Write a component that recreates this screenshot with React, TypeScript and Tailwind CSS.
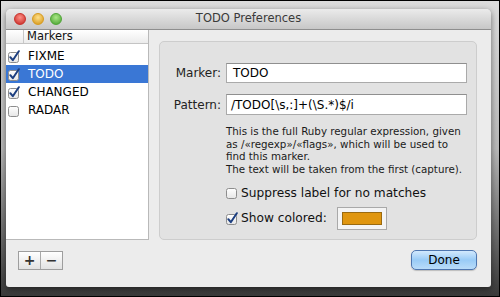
import React from 'react';

const font = { fontFamily: '"DejaVu Sans", "Liberation Sans", sans-serif' };

const Check = ({ checked }: { checked: boolean }) => (
  <svg width="13" height="13" viewBox="0 0 13 13" className="shrink-0">
    <defs>
      <linearGradient id="cb" x1="0" y1="0" x2="0" y2="1">
        <stop offset="0" stopColor="#ffffff" />
        <stop offset="1" stopColor="#e6e6e6" />
      </linearGradient>
    </defs>
    <rect x="1.5" y="2.5" width="10" height="10" rx="2" fill="url(#cb)" stroke="#8d8d8d" />
    {checked && (
      <path d="M3.3 7.2 L5.8 10.2 L11.8 1.2" fill="none" stroke="#1d3f80" strokeWidth="2" strokeLinecap="round" strokeLinejoin="round" />
    )}
  </svg>
);

const markers = [
  { name: 'FIXME', on: true },
  { name: 'TODO', on: true, selected: true },
  { name: 'CHANGED', on: true },
  { name: 'RADAR', on: false },
];

const Light = ({ color, dark }: { color: string; dark: string }) => (
  <div
    className="w-[12px] h-[12px] rounded-full border"
    style={{ background: `radial-gradient(circle at 50% 35%, ${color} 0%, ${dark} 90%)`, borderColor: dark }}
  />
);

export default function App() {
  return (
    <div className="w-[500px] h-[297px] border border-black bg-gradient-to-b from-[#dcdcdc] via-[#b8b8b8] to-[#3a3a3a] pl-[5px] pt-[8px] pr-[8px] pb-[9px]" style={font}>
      <div className="h-full flex flex-col bg-[#ececec] rounded-t-[5px] rounded-b-[3px] shadow-[0_2px_6px_rgba(0,0,0,0.5)] overflow-hidden">
        <div className="h-[21px] shrink-0 flex items-center bg-gradient-to-b from-[#ebebeb] to-[#c7c7c7] border-b border-[#8e8e8e]">
          <div className="w-[70px] flex items-center gap-[6px] pl-[8px]">
            <Light color="#ff8f86" dark="#c8302a" />
            <Light color="#ffe08a" dark="#d79a1e" />
            <Light color="#a9e886" dark="#4fa536" />
          </div>
          <div className="flex-1 text-center text-[11.5px] text-[#3a3a3a]">TODO Preferences</div>
          <div className="w-[70px]" />
        </div>

        <div className="flex flex-1">
          <div className="w-[143px] h-[210px] bg-white border-r border-b border-[#b9b9b9] flex flex-col">
            <div className="h-[14px] flex items-center border-b border-[#c4c4c4] bg-gradient-to-b from-[#ffffff] to-[#ececec] text-[11.5px] text-[#111]">
              <div className="w-[18px] h-full border-r border-[#c8c8c8]" />
              <span className="pl-[3px]">Markers</span>
            </div>
            <div className="pt-[3px]">
              {markers.map((m) => (
                <div
                  key={m.name}
                  className={`h-[18px] flex items-center gap-[8px] pl-[1px] text-[12px] ${m.selected ? 'bg-[#3a77d5] text-white' : 'text-black'}`}
                >
                  <Check checked={m.on} />
                  <span>{m.name}</span>
                </div>
              ))}
            </div>
          </div>

          <div className="flex-1 pl-[10px] pt-[11px] pr-[14px]">
            <div className="h-[199px] rounded-[5px] bg-[#e2e2e2] border border-[#cdcdcd] pt-[21px]">
              <div className="flex items-center h-[20px]">
                <div className="w-[61px] text-right text-[12px] text-[#222]">Marker:</div>
                <div className="flex-1 ml-[5px] mr-[9px] h-[20px] bg-white border border-[#aaaaaa] border-t-[#8f8f8f] pl-[6px] flex items-center text-[12px] text-black">TODO</div>
              </div>
              <div className="flex items-center h-[21px] mt-[11px]">
                <div className="w-[61px] text-right text-[12px] text-[#222]">Pattern:</div>
                <div className="flex-1 ml-[5px] mr-[9px] h-[21px] bg-white border border-[#aaaaaa] border-t-[#8f8f8f] pl-[4px] flex items-center text-[12px] text-black whitespace-nowrap">/TODO[\s,:]+(\S.*)$/i</div>
              </div>
              <div className="ml-[66px] mt-[10px] text-[10.3px] leading-[12.7px] text-[#1a1a1a] whitespace-nowrap">
                <div>This is the full Ruby regular expression, given</div>
                <div>as /«regexp»/«flags», which will be used to</div>
                <div>find this marker.</div>
                <div>The text will be taken from the first (capture).</div>
              </div>
              <div className="ml-[65px] mt-[9px] flex items-center gap-[3px] h-[16px] text-[12.2px] text-[#111]">
                <Check checked={false} />
                <span>Suppress label for no matches</span>
              </div>
              <div className="ml-[65px] mt-[6px] flex items-center gap-[3px] h-[23px] text-[12.2px] text-[#111]">
                <Check checked />
                <span>Show colored:</span>
                <div className="ml-[7px] w-[50px] h-[23px] bg-[#f4f4f4] border border-[#a9a9a9] p-[4px]">
                  <div className="w-full h-full bg-[#e0960f] border border-[#9a6a10]" />
                </div>
              </div>
            </div>
          </div>
        </div>

        <div className="h-[47px] shrink-0 flex items-start justify-between pt-[10px] pl-[12px] pr-[14px]">
          <div className="mt-[1px] flex h-[19px] border border-[#9e9e9e] bg-gradient-to-b from-[#ffffff] to-[#e2e2e2] text-[14px] font-bold text-[#333]">
            <div className="w-[22px] flex items-center justify-center border-r border-[#a9a9a9]">+</div>
            <div className="w-[21px] flex items-center justify-center">−</div>
          </div>
          <div className="w-[66px] h-[20px] rounded-[5px] border border-[#4e76b0] bg-gradient-to-b from-[#d2e9fd] via-[#99cbf6] to-[#b9dcf9] flex items-center justify-center text-[12px] text-black shadow-[0_1px_1px_rgba(0,0,0,0.2)]">Done</div>
        </div>
      </div>
    </div>
  );
}
